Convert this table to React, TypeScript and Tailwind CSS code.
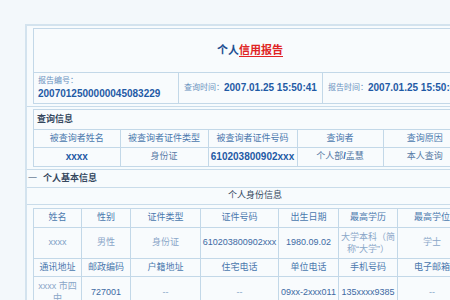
import React from "react";

const B = "border border-[#c3d8e8]";

export default function App() {
  const qHead = ["被查询者姓名", "被查询者证件类型", "被查询者证件号码", "查询者", "查询原因"];
  return (
    <div className="w-[450px] h-[300px] overflow-hidden bg-[#f3f8fb] font-['Liberation_Sans','Noto_Sans_CJK_SC',sans-serif] leading-none">
      <div className="pt-[24px] pl-[25px]">
        <div className="w-[450px] border-t-2 border-l-2 border-[#d3e3ee] bg-[#f7fbfd]">
          {/* Row A */}
          <div className="pl-[6px] pt-[2px] pb-[2px] border-b border-[#c9dcea]">
            <div className={`w-[434px] ${B} bg-[#f8fbfd]`}>
              <div className="h-[43px] flex items-center justify-center text-[11px] font-bold">
                <span className="text-[#1d4f91]">个人</span>
                <span className="text-[#e02424] underline underline-offset-2">信用报告</span>
              </div>
              <div className="flex h-[31px] border-t border-[#c3d8e8]">
                <div className="w-[145px] border-r border-[#c3d8e8] pl-[4px] flex flex-col justify-center gap-[4px]">
                  <span className="text-[8px] text-[#6a92c0]">报告编号：</span>
                  <span className="text-[10px] font-bold text-[#1f5aa5]">2007012500000045083229</span>
                </div>
                <div className="w-[144px] border-r border-[#c3d8e8] pl-[5px] flex items-center">
                  <span className="text-[8px] text-[#6a92c0]">查询时间：</span>
                  <span className="text-[10px] font-bold text-[#1f5aa5]">2007.01.25 15:50:41</span>
                </div>
                <div className="flex-1 pl-[5px] flex items-center whitespace-nowrap">
                  <span className="text-[8px] text-[#6a92c0]">报告时间：</span>
                  <span className="text-[10px] font-bold text-[#1f5aa5]">2007.01.25 15:50:41</span>
                </div>
              </div>
            </div>
          </div>
          {/* Row B */}
          <div className="pl-[6px] pt-[2px] pb-[2px] border-b border-[#c9dcea]">
            <div className={`w-[434px] ${B} bg-[#f8fbfd]`}>
              <div className="h-[19px] flex items-center pl-[3px] text-[9px] font-bold text-[#34475e]">查询信息</div>
              <table className="w-full border-collapse table-fixed text-[9px]">
                <colgroup>
                  <col className="w-[86px]" />
                  <col className="w-[88px]" />
                  <col className="w-[89px]" />
                  <col className="w-[86px]" />
                  <col />
                </colgroup>
                <tbody>
                  <tr className="h-[18px]">
                    {qHead.map((h, i) => (
                      <td key={i} className="border border-[#c3d8e8] border-l-0 last:border-r-0 text-center text-[#4a78ad] whitespace-nowrap">{h}</td>
                    ))}
                  </tr>
                  <tr className="h-[18px]">
                    <td className="border border-[#c3d8e8] border-l-0 border-b-0 text-center font-bold text-[10px] text-[#1f5aa5]">xxxx</td>
                    <td className="border border-[#c3d8e8] border-b-0 text-center text-[#5a7ca6]">身份证</td>
                    <td className="border border-[#c3d8e8] border-b-0 text-center font-bold text-[10px] text-[#1f5aa5] whitespace-nowrap">610203800902xxx</td>
                    <td className="border border-[#c3d8e8] border-b-0 text-center text-[#5a7ca6]">个人部<span className="font-bold text-[#1f5aa5]">/</span>孟慧</td>
                    <td className="border border-[#c3d8e8] border-b-0 border-r-0 text-center text-[#5a7ca6]">本人查询</td>
                  </tr>
                </tbody>
              </table>
            </div>
          </div>
          {/* Row C */}
          <div className="h-[18px] flex items-center pl-[1px] border-b border-[#c9dcea] text-[9px] font-bold text-[#34475e]">
            <span className="font-normal text-[#6c8198] mr-[6px]">一</span>个人基本信息
          </div>
          {/* Row D */}
          <div className="h-[17px] w-[450px] flex items-center justify-center pl-[6px] border-b border-[#c9dcea] text-[9px] text-[#34475e]">
            个人身份信息
          </div>
          {/* Row E */}
          <div className="pl-[6px] pt-[3px]">
            <table className="w-[434px] border-collapse table-fixed text-[9px] bg-[#f8fbfd]">
              <colgroup>
                <col className="w-[48px]" />
                <col className="w-[49px]" />
                <col className="w-[70px]" />
                <col className="w-[78px]" />
                <col className="w-[60px]" />
                <col className="w-[59px]" />
                <col />
              </colgroup>
              <tbody>
                <tr className="h-[19px]">
                  {["姓名", "性别", "证件类型", "证件号码", "出生日期", "最高学历", "最高学位"].map((h, i) => (
                    <td key={i} className="border border-[#c3d8e8] text-center text-[#4a78ad] whitespace-nowrap">{h}</td>
                  ))}
                </tr>
                <tr className="h-[31px]">
                  <td className="border border-[#c3d8e8] text-center text-[#7f9fc6]">xxxx</td>
                  <td className="border border-[#c3d8e8] text-center text-[#8aa6c8]">男性</td>
                  <td className="border border-[#c3d8e8] text-center text-[#8aa6c8]">身份证</td>
                  <td className="border border-[#c3d8e8] text-center text-[#3d6aa3] whitespace-nowrap">610203800902xxx</td>
                  <td className="border border-[#c3d8e8] text-center text-[#3d6aa3]">1980.09.02</td>
                  <td className="border border-[#c3d8e8] text-center text-[#8aa6c8] leading-[12px] px-[2px]">大学本科（简称“大学”）</td>
                  <td className="border border-[#c3d8e8] text-center text-[#8aa6c8]">学士</td>
                </tr>
                <tr className="h-[18px]">
                  {["通讯地址", "邮政编码", "户籍地址", "住宅电话", "单位电话", "手机号码", "电子邮箱"].map((h, i) => (
                    <td key={i} className="border border-[#c3d8e8] text-center text-[#4a78ad] whitespace-nowrap">{h}</td>
                  ))}
                </tr>
                <tr className="h-[32px]">
                  <td className="border border-[#c3d8e8] text-center text-[#8aa6c8] leading-[12px] px-[2px]">xxxx 市四中</td>
                  <td className="border border-[#c3d8e8] text-center text-[#3d6aa3]">727001</td>
                  <td className="border border-[#c3d8e8] text-center text-[#8aa6c8]">--</td>
                  <td className="border border-[#c3d8e8] text-center text-[#8aa6c8]">--</td>
                  <td className="border border-[#c3d8e8] text-center text-[#3d6aa3] whitespace-nowrap">09xx-2xxx011</td>
                  <td className="border border-[#c3d8e8] text-center text-[#3d6aa3] whitespace-nowrap">135xxxx9385</td>
                  <td className="border border-[#c3d8e8] text-center text-[#8aa6c8]">--</td>
                </tr>
              </tbody>
            </table>
          </div>
        </div>
      </div>
    </div>
  );
}
